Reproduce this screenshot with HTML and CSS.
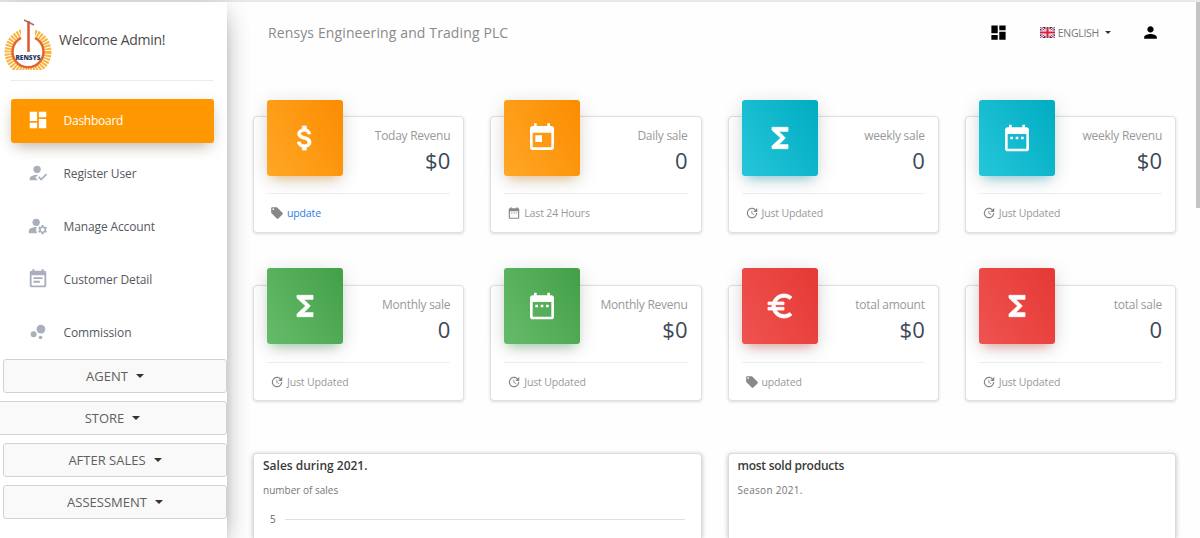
FILE: index.html
```
<!DOCTYPE html>
<html lang="en">
<head>
    <meta charset="UTF-8">
    <meta name="viewport" content="width=device-width, initial-scale=1.0">
    <title>Rensys Dashboard</title>
    <link rel="stylesheet" href="styles.css">
</head>
<body>
    <!-- icon set -->
    <svg class="icon-defs" aria-hidden="true">
        <symbol id="dashboard" viewBox="0 0 24 24"><path d="M3 13h8V3H3v10zm0 8h8v-6H3v6zm10 0h8V11h-8v10zm0-18v6h8V3h-8z"/></symbol>
        <symbol id="how-to-reg" viewBox="0 0 24 24"><circle cx="11" cy="8" r="4"/><path d="M9 17l3-2.94c-.39-.04-.68-.06-1-.06-2.67 0-8 1.34-8 4v2h9l-3-3zM15.47 20.5L12 17l1.4-1.41 2.07 2.08 5.13-5.17 1.4 1.41z"/></symbol>
        <symbol id="manage" viewBox="0 0 24 24"><circle cx="10" cy="8" r="4"/><path d="M10.67 13.02C10.45 13.01 10.23 13 10 13c-2.42 0-4.68.67-6.61 1.82C2.51 15.34 2 16.32 2 17.35V20h9.26c-.79-1.13-1.26-2.51-1.26-4 0-1.07.25-2.07.67-2.98zM20.75 16c0-.22-.03-.42-.06-.63l1.14-1.01-1-1.73-1.45.49c-.32-.27-.68-.48-1.08-.63L18 11h-2l-.3 1.49c-.4.15-.76.36-1.08.63l-1.45-.49-1 1.73 1.14 1.01c-.03.21-.06.41-.06.63s.03.42.06.63l-1.14 1.01 1 1.73 1.45-.49c.32.27.68.48 1.08.63L16 21h2l.3-1.49c.4-.15.76-.36 1.08-.63l1.45.49 1-1.73-1.14-1.01c.03-.21.06-.41.06-.63zM17 18c-1.1 0-2-.9-2-2s.9-2 2-2 2 .9 2 2-.9 2-2 2z"/></symbol>
        <symbol id="event-note" viewBox="0 0 24 24"><path d="M17 10H7v2h10v-2zm2-7h-1V1h-2v2H8V1H6v2H5c-1.11 0-1.99.9-1.99 2L3 19c0 1.1.89 2 2 2h14c1.1 0 2-.9 2-2V5c0-1.1-.9-2-2-2zm0 16H5V8h14v11zm-5-5H7v2h7v-2z"/></symbol>
        <symbol id="bubble" viewBox="0 0 24 24"><circle cx="7.2" cy="14.4" r="3.2"/><circle cx="14.8" cy="18" r="2"/><circle cx="15.2" cy="8.8" r="4.8"/></symbol>
        <symbol id="person" viewBox="0 0 24 24"><path d="M12 12c2.21 0 4-1.79 4-4s-1.79-4-4-4-4 1.79-4 4 1.79 4 4 4zm0 2c-2.67 0-8 1.34-8 4v2h16v-2c0-2.66-5.33-4-8-4z"/></symbol>
        <symbol id="money" viewBox="0 0 24 24"><path d="M11.8 10.9c-2.27-.59-3-1.2-3-2.15 0-1.09 1.01-1.85 2.7-1.85 1.78 0 2.44.85 2.5 2.1h2.21c-.07-1.72-1.12-3.3-3.21-3.81V3h-3v2.16c-1.94.42-3.5 1.68-3.5 3.61 0 2.31 1.91 3.46 4.7 4.13 2.5.6 3 1.48 3 2.41 0 .69-.49 1.79-2.7 1.79-2.06 0-2.87-.92-2.98-2.1h-2.2c.12 2.19 1.76 3.42 3.68 3.83V21h3v-2.15c1.95-.37 3.5-1.5 3.5-3.55 0-2.84-2.43-3.81-4.7-4.4z"/></symbol>
        <symbol id="today" viewBox="0 0 24 24"><path d="M19 3h-1V1h-2v2H8V1H6v2H5c-1.11 0-1.99.9-1.99 2L3 19c0 1.1.89 2 2 2h14c1.1 0 2-.9 2-2V5c0-1.1-.9-2-2-2zm0 16H5V8h14v11zM7 10h5v5H7z"/></symbol>
        <symbol id="date-range" viewBox="0 0 24 24"><path d="M9 11H7v2h2v-2zm4 0h-2v2h2v-2zm4 0h-2v2h2v-2zm2-7h-1V2h-2v2H8V2H6v2H5c-1.11 0-1.99.9-1.99 2L3 20c0 1.1.89 2 2 2h14c1.1 0 2-.9 2-2V6c0-1.1-.9-2-2-2zm0 16H5V9h14v11z"/></symbol>
        <symbol id="sigma" viewBox="0 0 24 24"><path d="M18 4H6v2l6.5 6L6 18v2h12v-3h-7l5-5-5-5h7z"/></symbol>
        <symbol id="euro" viewBox="0 0 24 24"><path d="M15 18.5c-2.51 0-4.68-1.42-5.76-3.5H15v-2H8.58c-.05-.33-.08-.66-.08-1s.03-.67.08-1H15V9H9.24C10.32 6.92 12.5 5.5 15 5.5c1.61 0 3.09.59 4.23 1.57L21 5.3C19.41 3.87 17.3 3 15 3c-3.92 0-7.24 2.51-8.48 6H3v2h3.06c-.04.33-.06.66-.06 1s.02.67.06 1H3v2h3.52c1.24 3.49 4.56 6 8.48 6 2.31 0 4.41-.87 6-2.3l-1.78-1.77c-1.13.98-2.6 1.57-4.22 1.57z"/></symbol>
        <symbol id="update" viewBox="0 0 24 24"><path d="M21 10.12h-6.78l2.74-2.82c-2.73-2.7-7.15-2.8-9.88-.1-2.73 2.71-2.73 7.08 0 9.79s7.15 2.71 9.88 0C18.32 15.65 19 14.08 19 12.1h2c0 1.98-.88 4.55-2.64 6.29-3.51 3.48-9.21 3.48-12.72 0-3.5-3.47-3.53-9.11-.02-12.58s9.14-3.47 12.65 0L21 3v7.12zM12.5 8v4.25l3.5 2.08-.72 1.21L11 13V8h1.5z"/></symbol>
        <symbol id="tag" viewBox="0 0 24 24"><path d="M21.41 11.58l-9-9C12.05 2.22 11.55 2 11 2H4c-1.1 0-2 .9-2 2v7c0 .55.22 1.05.59 1.42l9 9c.36.36.86.58 1.41.58.55 0 1.05-.22 1.41-.59l7-7c.37-.36.59-.86.59-1.41 0-.55-.23-1.06-.59-1.42zM5.5 7C4.67 7 4 6.33 4 5.5S4.67 4 5.5 4 7 4.67 7 5.5 6.33 7 5.5 7z"/></symbol>
    </svg>

    <div class="wrapper">
        <aside class="sidebar">
            <div class="logo">
                <svg class="logo-image" viewBox="0 0 48 52">
                    <circle class="rays" cx="24" cy="34" r="19"/>
                    <circle class="disc" cx="24" cy="34" r="16"/>
                    <path class="disc" d="M17 10h14v12H17z"/>
                    <path class="ring" d="M17 20A15.5 15.5 0 1 0 31 20"/>
                    <path class="pole" d="M24.5 3v31"/>
                    <path class="handle" d="M20 2l10 5"/>
                    <text class="logo-text" x="24" y="42" text-anchor="middle" textLength="25">RENSYS</text>
                </svg>
                <span class="welcome">Welcome Admin!</span>
            </div>
            <nav class="nav">
                <a class="nav-link active"><svg><use href="#dashboard"/></svg>Dashboard</a>
                <a class="nav-link"><svg><use href="#how-to-reg"/></svg>Register User</a>
                <a class="nav-link"><svg><use href="#manage"/></svg>Manage Account</a>
                <a class="nav-link"><svg><use href="#event-note"/></svg>Customer Detail</a>
                <a class="nav-link"><svg><use href="#bubble"/></svg>Commission</a>
            </nav>
            <div class="menus">
                <button class="menu-button">AGENT</button>
                <button class="menu-button menu-wide">STORE</button>
                <button class="menu-button">AFTER SALES</button>
                <button class="menu-button">ASSESSMENT</button>
            </div>
        </aside>

        <main class="main-panel">
            <header class="navbar">
                <span class="brand">Rensys Engineering and Trading PLC</span>
                <div class="navbar-right">
                    <svg class="nav-icon"><use href="#dashboard"/></svg>
                    <div class="language">
                        <svg class="flag" viewBox="0 0 15 11">
                            <path fill="#1f2f6b" d="M0 0h15v11H0z"/>
                            <path stroke="#fff" stroke-width="2.4" d="M0 0l15 11M15 0L0 11"/>
                            <path stroke="#d8203c" stroke-width="1" d="M0 0l15 11M15 0L0 11"/>
                            <path stroke="#fff" stroke-width="4" d="M7.5 0v11M0 5.5h15"/>
                            <path stroke="#d8203c" stroke-width="2.2" d="M7.5 0v11M0 5.5h15"/>
                        </svg>
                        <span class="language-name">ENGLISH</span>
                    </div>
                    <svg class="nav-icon"><use href="#person"/></svg>
                </div>
            </header>

            <section class="stats">
                <div class="card">
                    <div class="card-header">
                        <div class="card-icon orange"><svg class="bold"><use href="#money"/></svg></div>
                        <div class="card-data"><p class="category">Today Revenu</p><h3 class="value">$0</h3></div>
                    </div>
                    <div class="card-footer"><svg><use href="#tag"/></svg><a class="link">update</a></div>
                </div>
                <div class="card">
                    <div class="card-header">
                        <div class="card-icon orange"><svg><use href="#today"/></svg></div>
                        <div class="card-data"><p class="category">Daily sale</p><h3 class="value">0</h3></div>
                    </div>
                    <div class="card-footer"><svg><use href="#date-range"/></svg>Last 24 Hours</div>
                </div>
                <div class="card">
                    <div class="card-header">
                        <div class="card-icon cyan"><svg class="bold"><use href="#sigma"/></svg></div>
                        <div class="card-data"><p class="category">weekly sale</p><h3 class="value">0</h3></div>
                    </div>
                    <div class="card-footer"><svg><use href="#update"/></svg>Just Updated</div>
                </div>
                <div class="card">
                    <div class="card-header">
                        <div class="card-icon cyan"><svg><use href="#date-range"/></svg></div>
                        <div class="card-data"><p class="category">weekly Revenu</p><h3 class="value">$0</h3></div>
                    </div>
                    <div class="card-footer"><svg><use href="#update"/></svg>Just Updated</div>
                </div>
                <div class="card">
                    <div class="card-header">
                        <div class="card-icon green"><svg class="bold"><use href="#sigma"/></svg></div>
                        <div class="card-data"><p class="category">Monthly sale</p><h3 class="value">0</h3></div>
                    </div>
                    <div class="card-footer"><svg><use href="#update"/></svg>Just Updated</div>
                </div>
                <div class="card">
                    <div class="card-header">
                        <div class="card-icon green"><svg><use href="#date-range"/></svg></div>
                        <div class="card-data"><p class="category">Monthly Revenu</p><h3 class="value">$0</h3></div>
                    </div>
                    <div class="card-footer"><svg><use href="#update"/></svg>Just Updated</div>
                </div>
                <div class="card">
                    <div class="card-header">
                        <div class="card-icon red"><svg class="bold"><use href="#euro"/></svg></div>
                        <div class="card-data"><p class="category">total amount</p><h3 class="value">$0</h3></div>
                    </div>
                    <div class="card-footer"><svg><use href="#tag"/></svg>updated</div>
                </div>
                <div class="card">
                    <div class="card-header">
                        <div class="card-icon red"><svg class="bold"><use href="#sigma"/></svg></div>
                        <div class="card-data"><p class="category">total sale</p><h3 class="value">0</h3></div>
                    </div>
                    <div class="card-footer"><svg><use href="#update"/></svg>Just Updated</div>
                </div>
            </section>

            <section class="charts">
                <div class="chart">
                    <h4 class="chart-title">Sales during 2021.</h4>
                    <p class="chart-subtitle">number of sales</p>
                    <div class="axis-row"><span class="axis-label">5</span><span class="grid-line"></span></div>
                </div>
                <div class="chart">
                    <h4 class="chart-title title-tight">most sold products</h4>
                    <p class="chart-subtitle subtitle-wide">Season 2021.</p>
                </div>
            </section>
        </main>
        <div class="scrollbar"></div>
    </div>
</body>
</html>
```
FILE: styles.css
```
* {
    box-sizing: border-box;
}

body {
    margin: 0;
    height: 538px;
    overflow: hidden;
    background-color: #fefefe;
    font-family: "Open Sans", "Noto Sans", sans-serif;
    color: #3c4858;
}

svg {
    fill: currentColor;
    flex-shrink: 0;
}

.icon-defs {
    display: none;
}

.wrapper {
    position: relative;
    display: flex;
    height: 538px;
    border-top: 2px solid #e8e8e8;
}

/* sidebar */
.sidebar {
    width: 227px;
    flex-shrink: 0;
    background-color: #fff;
    box-shadow: 0 10px 28px -10px rgba(0, 0, 0, 0.42), 0 4px 24px 0 rgba(0, 0, 0, 0.12), 0 8px 10px -5px rgba(0, 0, 0, 0.18);
}

.logo {
    display: flex;
    height: 79px;
    margin: 0 14px 0 11px;
    border-bottom: 1px solid #eaeaea;
}

.logo-image {
    width: 48px;
    height: 52px;
    margin: 16px 0 0 -7px;
}

.rays {
    fill: none;
    stroke: #f9b443;
    stroke-width: 9;
    stroke-dasharray: 1.9 0.9;
}

.disc {
    fill: #fff;
}

.ring {
    fill: none;
    stroke: #e0662f;
    stroke-width: 2.5;
}

.pole {
    stroke: #dc5b38;
    stroke-width: 2.6;
}

.handle {
    stroke: #a06a68;
    stroke-width: 1.5;
}

.logo-text {
    fill: #28336c;
    font-size: 6.5px;
    font-weight: 800;
}

.welcome {
    margin: 28px 0 0 7px;
    font-size: 14px;
    line-height: 20px;
    letter-spacing: -0.28px;
    color: #4a4a4a;
    white-space: nowrap;
}

.nav {
    display: flex;
    flex-direction: column;
    gap: 9px;
    padding: 17.5px 13px 0 10.5px;
}

.nav-link {
    display: flex;
    align-items: center;
    gap: 15px;
    height: 44px;
    padding: 0 0 1px 16px;
    border-radius: 3px;
    font-size: 12px;
    letter-spacing: -0.12px;
    color: #55585e;
}

.nav-link svg {
    width: 22px;
    height: 22px;
    color: #a9afbb;
}

.nav-link.active {
    letter-spacing: -0.25px;
    color: #fff;
    background-color: #ff9800;
    box-shadow: 0 8px 16px -6px rgba(120, 100, 60, 0.4), 0 3px 14px rgba(0, 0, 0, 0.1);
}

.nav-link.active svg {
    color: #fff;
}

.menus {
    display: flex;
    flex-direction: column;
    gap: 8px;
    padding: 4.5px 0 0 3px;
}

.menu-button {
    display: flex;
    align-items: center;
    justify-content: center;
    gap: 8px;
    height: 34px;
    border: 1px solid #d2d2d2;
    border-radius: 3px;
    background-color: #f9f9f9;
    font-family: inherit;
    font-size: 13px;
    color: #606060;
}

.menu-button::after,
.language::after {
    content: "";
    border-left: 4.5px solid transparent;
    border-right: 4.5px solid transparent;
    border-top: 4.5px solid #333;
}

.menu-wide {
    margin-left: -5px;
}

/* main panel */
.main-panel {
    display: flex;
    flex: 1;
    flex-direction: column;
    min-width: 0;
    padding: 0 24px 0 26px;
}

.navbar {
    display: flex;
    align-items: center;
    justify-content: space-between;
    height: 61px;
    padding: 0 16px 0 15px;
}

.brand {
    font-size: 14px;
    letter-spacing: 0.12px;
    color: #8a8a8a;
}

.navbar-right {
    display: flex;
    align-items: center;
    color: #000;
}

.nav-icon {
    width: 19px;
    height: 19px;
}

.language {
    display: flex;
    align-items: center;
    gap: 3px;
    margin: 0 30px 0 32px;
    font-size: 10.5px;
    letter-spacing: -0.3px;
    color: #777;
}

.language::after {
    border-width: 3px 3px 0;
    margin-left: 3px;
}

.flag {
    width: 15px;
    height: 11px;
}

.stats {
    display: grid;
    grid-template-columns: repeat(4, 1fr);
    gap: 52px 26px;
    padding-top: 53px;
}

.card {
    height: 116.5px;
    padding: 0 13px;
    border: 1px solid #e0e0e0;
    border-radius: 4px;
    background-color: #fff;
    box-shadow: 0 1px 3px rgba(0, 0, 0, 0.14);
}

.card-header {
    display: flex;
    justify-content: space-between;
    height: 77px;
    border-bottom: 1px solid #eee;
}

.card-icon {
    display: flex;
    align-items: center;
    justify-content: center;
    width: 76px;
    height: 76px;
    margin-top: -17.5px;
    border-radius: 3px;
    color: #fff;
}

.card-icon svg {
    width: 32px;
    height: 32px;
}

.card-icon .bold {
    stroke: currentColor;
    stroke-width: 0.6;
}

.orange {
    background: linear-gradient(60deg, #ffa726, #fb8c00);
    box-shadow: 0 4px 20px rgba(0, 0, 0, 0.14), 0 7px 10px -5px rgba(255, 152, 0, 0.4);
}

.cyan {
    background: linear-gradient(60deg, #26c6da, #00acc1);
    box-shadow: 0 4px 20px rgba(0, 0, 0, 0.14), 0 7px 10px -5px rgba(0, 188, 212, 0.4);
}

.green {
    background: linear-gradient(60deg, #66bb6a, #43a047);
    box-shadow: 0 4px 20px rgba(0, 0, 0, 0.14), 0 7px 10px -5px rgba(76, 175, 80, 0.4);
}

.red {
    background: linear-gradient(60deg, #ef5350, #e53935);
    box-shadow: 0 4px 20px rgba(0, 0, 0, 0.14), 0 7px 10px -5px rgba(244, 67, 54, 0.4);
}

.card-data {
    text-align: right;
}

.category {
    margin: 10px 0 0;
    font-size: 12px;
    line-height: 18px;
    letter-spacing: -0.26px;
    color: #999;
    white-space: nowrap;
}

.value {
    margin: 1px 0 0;
    font-size: 22px;
    font-weight: 500;
    line-height: 28px;
}

.card-footer {
    display: flex;
    align-items: center;
    gap: 3px;
    height: 38px;
    padding-left: 3px;
    font-size: 10.5px;
    letter-spacing: -0.14px;
    color: #999;
}

.card-footer svg {
    width: 14px;
    height: 14px;
    color: #888;
}

.link {
    color: #2b7de9;
}

.charts {
    display: grid;
    flex: 1;
    grid-template-columns: repeat(2, 1fr);
    gap: 26px;
    padding-top: 52px;
}

.chart {
    padding: 3px 16px 0 9px;
    border: 1px solid #dcdcdc;
    border-bottom: 0;
    border-radius: 4px 4px 0 0;
    background-color: #fff;
    box-shadow: 0 1px 5px rgba(0, 0, 0, 0.26);
}

.chart-title {
    margin: 0;
    font-size: 12px;
    font-weight: 600;
    line-height: 18px;
    color: #3a3a3a;
}

.title-tight {
    letter-spacing: -0.26px;
}

.chart-subtitle {
    margin: 7px 0 0;
    font-size: 10px;
    line-height: 16px;
    color: #777;
}

.subtitle-wide {
    letter-spacing: 0.3px;
}

.axis-row {
    display: flex;
    align-items: center;
    gap: 9px;
    margin-top: 14px;
    padding-left: 7px;
}

.axis-label {
    font-size: 10px;
    line-height: 14px;
    color: #666;
}

.grid-line {
    flex: 1;
    height: 1px;
    background-color: #e0e0e0;
}

/* page scroll thumb */
.scrollbar {
    position: absolute;
    top: 0;
    right: 0;
    width: 4px;
    height: 206px;
    background-color: #c4c4c4;
}
```
